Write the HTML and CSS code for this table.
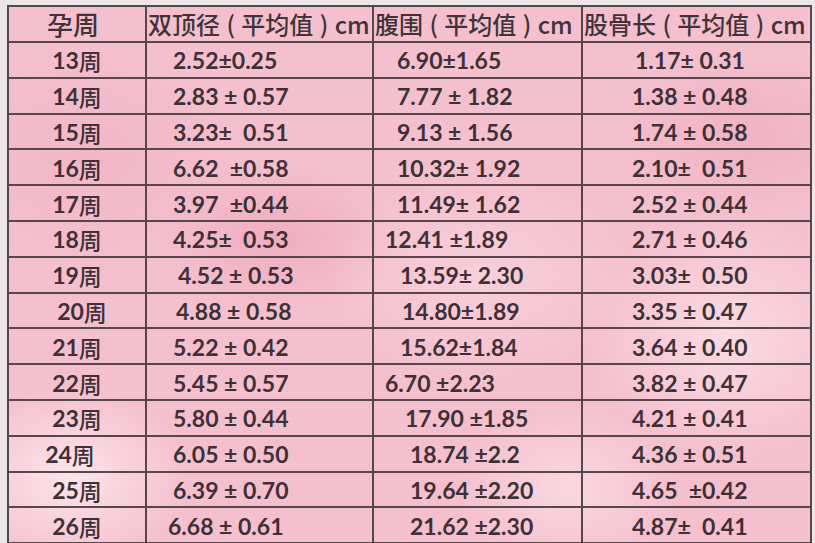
FILE: index.html
```html
<!DOCTYPE html>
<html lang="zh">
<head>
<meta charset="utf-8">
<title>孕周胎儿发育参考表</title>
<link rel="stylesheet" href="styles.css">
</head>
<body>
<div class="sheet">
  <div class="table">
    <div class="cell head week">孕周</div>
    <div class="cell head c1">双顶径 ( 平均值 ) cm</div>
    <div class="cell head c2">腹围 ( 平均值 ) cm</div>
    <div class="cell head c3">股骨长 ( 平均值 ) cm</div>

    <div class="cell week">13<span class="zh">周</span></div>
    <div class="cell num c1">2.52±0.25</div>
    <div class="cell num c2">6.90±1.65</div>
    <div class="cell num c3 r3">1.17± 0.31</div>

    <div class="cell week">14<span class="zh">周</span></div>
    <div class="cell num c1">2.83 ± 0.57</div>
    <div class="cell num c2">7.77 ± 1.82</div>
    <div class="cell num c3">1.38 ± 0.48</div>

    <div class="cell week">15<span class="zh">周</span></div>
    <div class="cell num c1">3.23±  0.51</div>
    <div class="cell num c2">9.13 ± 1.56</div>
    <div class="cell num c3">1.74 ± 0.58</div>

    <div class="cell week">16<span class="zh">周</span></div>
    <div class="cell num c1">6.62  ±0.58</div>
    <div class="cell num c2">10.32± 1.92</div>
    <div class="cell num c3">2.10±  0.51</div>

    <div class="cell week">17<span class="zh">周</span></div>
    <div class="cell num c1">3.97  ±0.44</div>
    <div class="cell num c2">11.49± 1.62</div>
    <div class="cell num c3">2.52 ± 0.44</div>

    <div class="cell week">18<span class="zh">周</span></div>
    <div class="cell num c1">4.25±  0.53</div>
    <div class="cell num c2 l12">12.41 ±1.89</div>
    <div class="cell num c3">2.71 ± 0.46</div>

    <div class="cell week">19<span class="zh">周</span></div>
    <div class="cell num c1 r5">4.52 ± 0.53</div>
    <div class="cell num c2 r3">13.59± 2.30</div>
    <div class="cell num c3">3.03±  0.50</div>

    <div class="cell week r5">20<span class="zh">周</span></div>
    <div class="cell num c1 r3">4.88 ± 0.58</div>
    <div class="cell num c2 r5">14.80±1.89</div>
    <div class="cell num c3">3.35 ± 0.47</div>

    <div class="cell week">21<span class="zh">周</span></div>
    <div class="cell num c1">5.22 ± 0.42</div>
    <div class="cell num c2 r3">15.62±1.84</div>
    <div class="cell num c3">3.64 ± 0.40</div>

    <div class="cell week">22<span class="zh">周</span></div>
    <div class="cell num c1">5.45 ± 0.57</div>
    <div class="cell num c2 l12">6.70 ±2.23</div>
    <div class="cell num c3">3.82 ± 0.47</div>

    <div class="cell week">23<span class="zh">周</span></div>
    <div class="cell num c1">5.80 ± 0.44</div>
    <div class="cell num c2 r8">17.90 ±1.85</div>
    <div class="cell num c3">4.21 ± 0.41</div>

    <div class="cell week l5">24<span class="zh">周</span></div>
    <div class="cell num c1">6.05 ± 0.50</div>
    <div class="cell num c2 r13">18.74 ±2.2</div>
    <div class="cell num c3">4.36 ± 0.51</div>

    <div class="cell week">25<span class="zh">周</span></div>
    <div class="cell num c1">6.39 ± 0.70</div>
    <div class="cell num c2 r13">19.64 ±2.20</div>
    <div class="cell num c3">4.65  ±0.42</div>

    <div class="cell week">26<span class="zh">周</span></div>
    <div class="cell num c1 l5">6.68 ± 0.61</div>
    <div class="cell num c2 r13">21.62 ±2.30</div>
    <div class="cell num c3">4.87±  0.41</div>
  </div>
</div>
</body>
</html>
```
FILE: styles.css
```css
html, body {
  margin: 0;
  padding: 0;
}

body {
  width: 815px;
  height: 543px;
  overflow: hidden;
  background: #ece6e8;
  font-family: "Lato", "Noto Sans CJK SC", sans-serif;
  color: #3d3137;
}

.sheet {
  padding: 5px 0 0 7px;
}

.table {
  display: grid;
  grid-template-columns: 138px 227px 209px 229px;
  grid-template-rows: 36px;
  grid-auto-rows: 35.8px;
  width: max-content;
  border-top: 2px solid #56474d;
  border-left: 2px solid #56474d;
  background:
    radial-gradient(ellipse 120px 90px at 60px 470px, rgba(255,240,244,0.75), rgba(255,240,244,0) 100%),
    radial-gradient(ellipse 140px 120px at 720px 330px, rgba(255,236,241,0.6), rgba(255,236,241,0) 100%),
    radial-gradient(ellipse 110px 80px at 560px 480px, rgba(255,236,241,0.55), rgba(255,236,241,0) 100%),
    radial-gradient(ellipse 150px 100px at 470px 270px, rgba(250,226,233,0.45), rgba(250,226,233,0) 100%),
    radial-gradient(ellipse 120px 80px at 270px 230px, rgba(236,150,175,0.45), rgba(236,150,175,0) 100%),
    radial-gradient(ellipse 140px 90px at 740px 130px, rgba(236,150,175,0.35), rgba(236,150,175,0) 100%),
    radial-gradient(ellipse 160px 120px at 80px 150px, rgba(238,160,182,0.3), rgba(238,160,182,0) 100%),
    #f4c0ce;
}

.cell {
  border-right: 2px solid #56474d;
  border-bottom: 2px solid #56474d;
  display: flex;
  align-items: center;
  white-space: pre;
  overflow: visible;
  font-size: 23px;
  font-weight: 700;
  line-height: 1;
  padding-top: 2px;
}

.head {
  font-family: "Noto Sans CJK SC", sans-serif;
  font-size: 24px;
  font-weight: 500;
  color: #40333a;
  word-spacing: 1px;
  padding-top: 0;
}

.head.c1,
.head.c2,
.head.c3 {
  padding-left: 1px;
  justify-content: flex-start;
}

.week {
  justify-content: center;
}

.head.week {
  font-size: 26px;
  padding-right: 8px;
}

.zh {
  font-family: "Noto Sans CJK SC", sans-serif;
  font-size: 23px;
  font-weight: 500;
}

.num.c1 { padding-left: 26px; }
.num.c2 { padding-left: 23px; }
.num.c3 { padding-left: 49px; }

.c1.r3 { padding-left: 29px; }
.c1.r5 { padding-left: 31px; }
.c1.l5 { padding-left: 21px; }

.c2.r3 { padding-left: 26px; }
.c2.r5 { padding-left: 28px; }
.c2.r8 { padding-left: 31px; }
.c2.r13 { padding-left: 36px; }
.c2.l12 { padding-left: 11px; }

.c3.r3 { padding-left: 52px; }

.week.r5 { padding-left: 10px; }
.week.l5 { padding-right: 14px; }
```
